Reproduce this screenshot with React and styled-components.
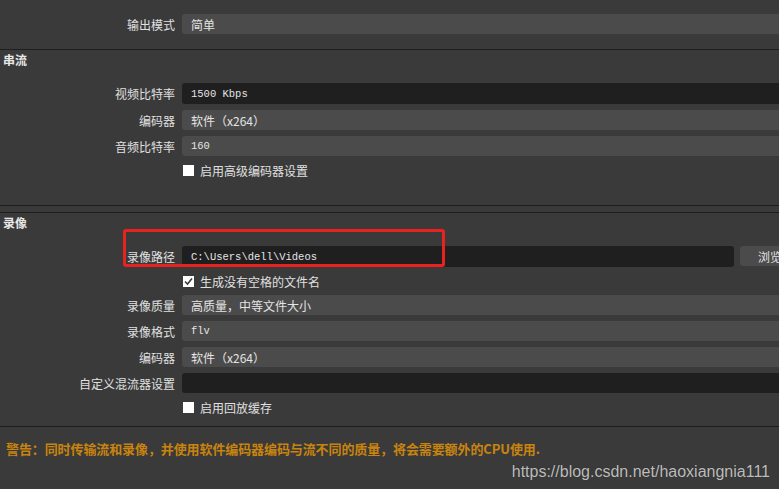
import React from "react"
import styled, { createGlobalStyle } from "styled-components"

const GlobalStyle = createGlobalStyle`
  html, body {
    margin: 0;
    padding: 0;
    background: #3a3a3a;
    overflow: hidden;
  }
  body {
    font-family: "Noto Sans CJK SC", "Liberation Sans", sans-serif;
    color: #dedede;
  }
`;

const Page = styled.div`
  width: 779px;
  height: 489px;
  display: flex;
  flex-direction: column;
  background: #3a3a3a;
`;

const Divider = styled.div`
  margin-top: ${p => p.$mt || 0}px;
  height: 1px;
  background: #1e1e1e;
  flex-shrink: 0;
`;

const SectionTitle = styled.div`
  margin-top: ${p => p.$mt || 0}px;
  height: 16px;
  padding-left: 3px;
  display: flex;
  align-items: center;
  font-size: 12px;
  font-weight: 700;
  color: #e8e8e8;
`;

const Row = styled.div`
  position: relative;
  margin-top: ${p => p.$mt || 0}px;
  margin-right: -60px;
  height: ${p => p.$h || 20}px;
  display: grid;
  grid-template-columns: 175px 1fr;
  column-gap: 7px;
  align-items: stretch;
`;

const Label = styled.div`
  display: flex;
  align-items: center;
  justify-content: flex-end;
  font-size: 12px;
  color: #e0e0e0;
  white-space: nowrap;
`;

const Field = styled.div`
  display: flex;
  align-items: center;
  padding-left: 9px;
  border-radius: 3px;
  background: ${p => (p.$dark ? "#1f1f1f" : "#4b4b4b")};
  font-family: ${p =>
    p.$mono
      ? `"Liberation Mono", "Noto Sans CJK SC", monospace`
      : `"Noto Sans CJK SC", "Liberation Sans", sans-serif`};
  font-size: ${p => (p.$mono ? 10.5 : 12)}px;
  color: #e4e4e4;
  white-space: nowrap;
`;

const FieldGroup = styled.div`
  display: flex;
  gap: 6px;
`;

const PathField = styled(Field)`
  width: 543px;
  flex-shrink: 0;
`;

const BrowseButton = styled.div`
  width: 60px;
  height: 20px;
  border-radius: 3px;
  background: #4b4b4b;
  display: flex;
  align-items: center;
  justify-content: center;
  font-size: 12px;
  color: #e2e2e2;
`;

const CheckRow = styled.div`
  margin-top: ${p => p.$mt || 0}px;
  height: 16px;
  padding-left: 183px;
  display: flex;
  align-items: center;
  gap: 6px;
  font-size: 12px;
  color: #e0e0e0;
`;

const Box = styled.span`
  width: 11px;
  height: 11px;
  background: #ffffff;
  display: flex;
  align-items: center;
  justify-content: center;
  flex-shrink: 0;
`;

const Highlight = styled.div`
  position: absolute;
  left: 123px;
  top: -17px;
  width: 316px;
  height: 32px;
  border: 3px solid #e8231f;
  border-radius: 3px;
  pointer-events: none;
`;

const Warning = styled.div`
  margin-top: ${p => p.$mt || 0}px;
  height: 14px;
  padding-left: 6px;
  display: flex;
  align-items: center;
  font-size: 13px;
  font-weight: 700;
  letter-spacing: -0.1px;
  color: #c9840e;
  white-space: nowrap;
`;

const Watermark = styled.div`
  margin-top: 8px;
  height: 18px;
  padding-right: 9px;
  text-align: right;
  font-family: "Liberation Sans", Arial, sans-serif;
  font-size: 16px;
  line-height: 18px;
  color: #bdbdbd;
  text-shadow: 0 0 1px rgba(0, 0, 0, 0.4);
`;

const Checkbox = ({ checked, children, mt }) => (
  <CheckRow $mt={mt}>
    <Box>
      {checked && (
        <svg width="11" height="11" viewBox="0 0 11 11">
          <path d="M2 5.5 L4.5 8 L9 2.5" fill="none" stroke="#3a3a3a" strokeWidth="1.6" />
        </svg>
      )}
    </Box>
    <span>{children}</span>
  </CheckRow>
);

const App = () => {
  return (
    <Page>
      <GlobalStyle />
      <Row $mt={14}>
        <Label>输出模式</Label>
        <Field>简单</Field>
      </Row>
      <Divider $mt={15} />

      <SectionTitle $mt={1}>串流</SectionTitle>
      <Row $mt={16} $h={21}>
        <Label>视频比特率</Label>
        <Field $dark $mono>1500 Kbps</Field>
      </Row>
      <Row $mt={6}>
        <Label>编码器</Label>
        <Field>软件（x264）</Field>
      </Row>
      <Row $mt={6}>
        <Label>音频比特率</Label>
        <Field $mono>160</Field>
      </Row>
      <Checkbox mt={6}>启用高级编码器设置</Checkbox>

      <Divider $mt={27} />
      <Divider $mt={6} />

      <SectionTitle $mt={1}>录像</SectionTitle>
      <Row $mt={16} $h={21}>
        <Label>录像路径</Label>
        <FieldGroup>
          <PathField $dark $mono>C:\Users\dell\Videos</PathField>
          <BrowseButton>浏览</BrowseButton>
        </FieldGroup>
        <Highlight />
      </Row>
      <Checkbox mt={6} checked>生成没有空格的文件名</Checkbox>
      <Row $mt={6}>
        <Label>录像质量</Label>
        <Field>高质量，中等文件大小</Field>
      </Row>
      <Row $mt={6}>
        <Label>录像格式</Label>
        <Field $mono>flv</Field>
      </Row>
      <Row $mt={6}>
        <Label>编码器</Label>
        <Field>软件（x264）</Field>
      </Row>
      <Row $mt={6}>
        <Label>自定义混流器设置</Label>
        <Field $dark></Field>
      </Row>
      <Checkbox mt={6}>启用回放缓存</Checkbox>

      <Divider $mt={11} />
      <Warning $mt={14}>警告：同时传输流和录像，并使用软件编码器编码与流不同的质量，将会需要额外的CPU使用.</Warning>
      <Watermark>https://blog.csdn.net/haoxiangnia111</Watermark>
    </Page>
  )
}

export default App;
